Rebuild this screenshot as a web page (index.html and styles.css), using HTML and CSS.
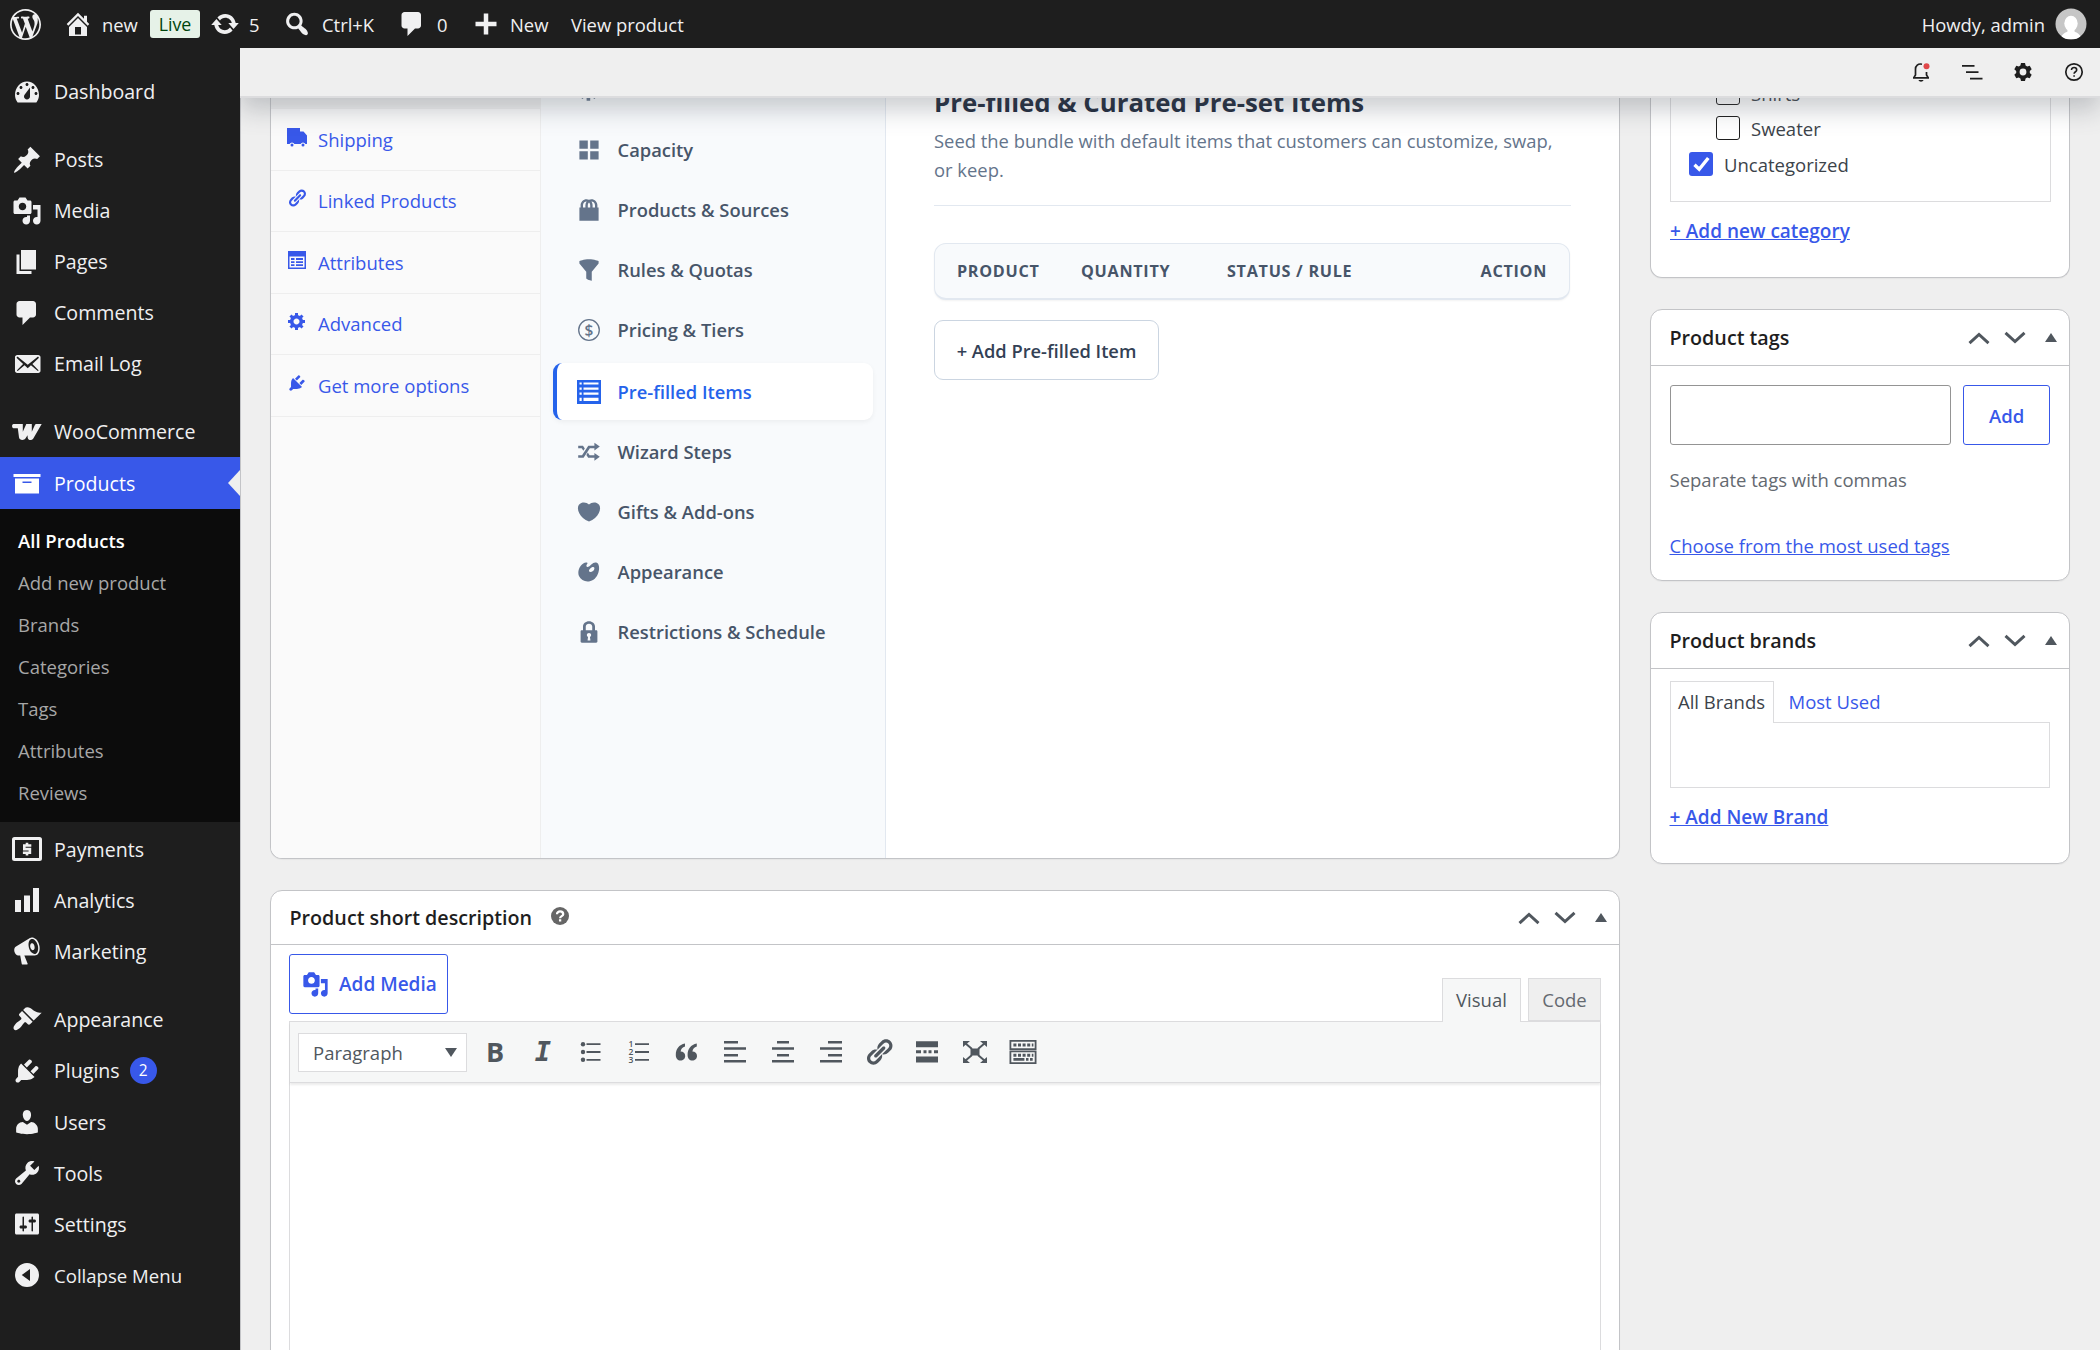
FILE: index.html
```html
<!DOCTYPE html>
<html lang="en">
<head>
    <meta charset="UTF-8">
    <meta name="viewport" content="width=device-width, initial-scale=1.0">
    <title>Edit product</title>
    <link rel="stylesheet" href="styles.css">
</head>
<body>
    <svg class="sprite" xmlns="http://www.w3.org/2000/svg">
        <symbol id="i-wp" viewBox="0 0 20 20"><path d="M20 10c0-5.51-4.49-10-10-10C4.48 0 0 4.49 0 10c0 5.52 4.48 10 10 10 5.51 0 10-4.48 10-10zM7.78 15.37L4.37 6.22c.55-.02 1.17-.08 1.17-.08.5-.06.44-1.13-.06-1.11 0 0-1.45.11-2.37.11-.18 0-.37 0-.58-.01C4.12 2.69 6.87 1.11 10 1.11c2.33 0 4.45.87 6.05 2.34-.68-.11-1.65.39-1.65 1.58 0 .74.45 1.36.9 2.1.35.61.55 1.36.55 2.46 0 1.49-1.4 5-1.4 5l-3.03-8.37c.54-.02.82-.17.82-.17.5-.05.44-1.25-.06-1.22 0 0-1.44.12-2.38.12-.87 0-2.33-.12-2.33-.12-.5-.03-.56 1.2-.06 1.22l.92.08 1.26 3.41zM17.41 10c.24-.64.74-1.87.43-4.25.7 1.29 1.05 2.71 1.05 4.25 0 3.29-1.73 6.24-4.4 7.78.97-2.59 1.94-5.2 2.92-7.78zM6.1 18.09C3.12 16.65 1.11 13.53 1.11 10c0-1.3.23-2.48.72-3.59C3.25 10.3 4.67 14.2 6.1 18.09zm4.03-6.63l2.58 6.98c-.86.29-1.76.45-2.71.45-.79 0-1.57-.11-2.29-.33.81-2.38 1.62-4.74 2.42-7.1z"/></symbol>
        <symbol id="i-home" viewBox="0 0 20 20"><path d="M16 8.5l1.53 1.53-1.06 1.06L10 4.6l-6.47 6.5-1.06-1.07L10 2.5l4 4v-2h2v4zm-6-2.46l6 5.99V18H4v-5.97zM12 17v-5H8v5h4z"/></symbol>
        <symbol id="i-update" viewBox="0 0 20 20"><path d="M10.2 3.28c3.53 0 6.43 2.61 6.92 6h2.08l-3.5 4-3.5-4h2.32c-.45-1.97-2.21-3.45-4.32-3.45-1.45 0-2.73.71-3.54 1.78L4.95 5.66C6.23 4.2 8.11 3.28 10.2 3.28zm-.4 13.44c-3.52 0-6.43-2.61-6.92-6H.8l3.5-4c1.17 1.33 2.33 2.67 3.5 4H5.48c.45 1.97 2.21 3.45 4.32 3.45 1.45 0 2.73-.71 3.54-1.78l1.71 1.95c-1.28 1.46-3.15 2.38-5.25 2.38z"/></symbol>
        <symbol id="i-search" viewBox="0 0 20 20"><path d="M12.14 4.18c1.87 1.87 2.11 4.75.72 6.89.12.1.22.21.36.31.2.16.47.36.81.59.34.24.56.39.66.47.42.31.73.57.94.78.32.32.6.65.84 1 .25.35.44.69.59 1.04.14.35.21.68.18 1-.02.32-.14.59-.36.81s-.49.34-.81.36c-.31.02-.65-.04-.99-.19-.35-.14-.7-.34-1.04-.59-.35-.24-.68-.52-1-.84-.21-.21-.47-.52-.77-.93-.1-.13-.25-.35-.47-.66-.22-.32-.4-.57-.56-.78-.16-.2-.29-.35-.44-.5-2.07 1.09-4.69.76-6.44-.98-2.14-2.15-2.14-5.64 0-7.78 2.15-2.15 5.63-2.15 7.78 0zm-1.41 6.36c1.36-1.37 1.36-3.58 0-4.95-1.37-1.37-3.59-1.37-4.95 0-1.37 1.37-1.37 3.58 0 4.95 1.36 1.37 3.58 1.37 4.95 0z"/></symbol>
        <symbol id="i-comment" viewBox="0 0 20 20"><path d="M5 2h9c1.1 0 2 .9 2 2v7c0 1.1-.9 2-2 2h-2l-5 5v-5H5c-1.1 0-2-.9-2-2V4c0-1.1.9-2 2-2z"/></symbol>
        <symbol id="i-plus" viewBox="0 0 20 20"><path d="M17 8.5v3h-5.5V17h-3v-5.5H3v-3h5.5V3h3v5.5z"/></symbol>
        <symbol id="i-dashboard" viewBox="0 0 20 20"><path fill-rule="evenodd" d="M3.76 17h12.48c1.1-1.37 1.76-3.11 1.76-5 0-4.97-3.58-9-8-9s-8 4.03-8 9c0 1.89.66 3.63 1.76 5zM10 4c.55 0 1 .45 1 1s-.45 1-1 1-1-.45-1-1 .45-1 1-1zM6 6c.55 0 1 .45 1 1s-.45 1-1 1-1-.45-1-1 .45-1 1-1zm8 0c.55 0 1 .45 1 1s-.45 1-1 1-1-.45-1-1 .45-1 1-1zm-5.37 5.55L12 7v6c0 1.1-.9 2-2 2s-2-.9-2-2c0-.57.24-1.08.63-1.45zM4 10c.55 0 1 .45 1 1s-.45 1-1 1-1-.45-1-1 .45-1 1-1zm12 0c.55 0 1 .45 1 1s-.45 1-1 1-1-.45-1-1 .45-1 1-1z"/></symbol>
        <symbol id="i-post" viewBox="0 0 20 20"><path d="M10.44 3.02l1.82-1.82 6.36 6.35-1.83 1.82c-1.05-.68-2.48-.57-3.41.36l-.75.75c-.92.93-1.04 2.35-.35 3.41l-1.83 1.82-2.41-2.41-2.8 2.79c-.42.42-3.38 2.71-3.8 2.29s1.86-3.39 2.28-3.81l2.79-2.79L4.1 9.36l1.83-1.82c1.05.69 2.48.57 3.4-.36l.75-.75c.93-.92 1.05-2.35.36-3.41z"/></symbol>
        <symbol id="i-media" viewBox="0 0 20 20"><path fill-rule="evenodd" d="M13 11V4c0-.55-.45-1-1-1h-1.67L9 1H5L3.67 3H2c-.55 0-1 .45-1 1v7c0 .55.45 1 1 1h10c.55 0 1-.45 1-1zM7 4.5c1.38 0 2.5 1.12 2.5 2.5S8.38 9.5 7 9.5 4.5 8.38 4.5 7 5.62 4.5 7 4.5zM14 6h5v10.5c0 1.38-1.12 2.5-2.5 2.5S14 17.88 14 16.5s1.12-2.5 2.5-2.5c.17 0 .34.02.5.05V9h-3V6zm-4 8.05V13h2v3.5c0 1.38-1.12 2.5-2.5 2.5S7 17.88 7 16.5 8.12 14 9.5 14c.17 0 .34.02.5.05z"/></symbol>
        <symbol id="i-page" viewBox="0 0 20 20"><path d="M6 15V2h10v13H6zm-1 1h8v2H3V5h2v11z"/></symbol>
        <symbol id="i-email" viewBox="0 0 20 20"><path fill-rule="evenodd" d="M19 14.5v-9c0-.83-.67-1.5-1.5-1.5H3.49c-.83 0-1.5.67-1.5 1.5v9c0 .83.67 1.5 1.5 1.5H17.5c.83 0 1.5-.67 1.5-1.5zm-1.31-9.11c.33.33.15.67-.03.84L13.6 9.95l3.9 4.06c.12.14.2.36.06.51-.13.16-.43.15-.56.05l-4.37-3.73-2.14 1.95-2.13-1.95-4.37 3.73c-.13.1-.43.11-.56-.05-.14-.15-.06-.37.06-.51l3.9-4.06-4.06-3.72c-.18-.17-.36-.51-.03-.84s.67-.17.95.07l6.24 5.04 6.25-5.04c.28-.24.62-.4.95-.07z"/></symbol>
        <symbol id="i-woo" viewBox="0 0 30 30"><path d="M1.500 7h9.300v7.800L14.300 7h5.500v7.800L23 7.800Q23.400 7 24.200 7h5.500L21.300 21.500c-1.300 2.200-5.300 2-5.600-.8l-.2-2.500-1.900 3.100c-1.500 2.600-6.300 2.200-6.600-1L5.800 11.200H1.500C-.4 11.200-.4 7 1.500 7z"/></symbol>
        <symbol id="i-archive" viewBox="0 0 20 20"><path fill-rule="evenodd" d="M19 4v2H1V4h18zM2 7h16v10H2V7zm11 3V9H7v1h6z"/></symbol>
        <symbol id="i-payments" viewBox="0 0 30 30"><rect x="1.500" y="4.500" width="27" height="21" rx="1" fill="none" stroke="currentColor" stroke-width="3"/><path fill="none" stroke="currentColor" stroke-width="2.600" d="M19.300 11.500h-7v3.600h5.600v3.700h-7M15 8.800v2.500m0 7.500v2.600"/></symbol>
        <symbol id="i-chart" viewBox="0 0 20 20"><path d="M18 18V2h-4v16h4zm-6 0V7H8v11h4zm-6 0v-8H2v8h4z"/></symbol>
        <symbol id="i-megaphone" viewBox="0 0 20 20"><path fill-rule="evenodd" d="M18.150 5.940c.46 1.620.38 3.220-.02 4.480-.42 1.280-1.260 2.180-2.300 2.480-.16.06-.26.06-.4.06-.06.02-.12.02-.18.02-.06.02-.14.02-.22.02h-6.800l2.220 5.500c.02.14-.06.26-.14.34-.08.1-.24.16-.34.16H6.950c-.1 0-.26-.06-.34-.16-.08-.08-.16-.2-.14-.34l-1-5.500H4.250l-.02-.02c-.5.06-1.080-.18-1.540-.62s-.88-1.080-1.060-1.880c-.24-.8-.2-1.560-.02-2.200.18-.62.58-1.080 1.060-1.300l.02-.02 9-5.400c.1-.06.18-.1.24-.16.06-.04.14-.08.24-.12.16-.08.28-.12.5-.18 1.040-.3 2.240.1 3.220.98s1.840 2.240 2.260 3.860zm-2.580 5.980h-.02c.4-.1.74-.34 1.040-.7.58-.7.86-1.760.86-3.040 0-.64-.1-1.300-.28-1.980-.34-1.360-1.020-2.500-1.780-3.240s-1.680-1.100-2.460-.88c-.82.22-1.400.96-1.700 2-.32 1.040-.28 2.360.06 3.720.38 1.360 1 2.500 1.800 3.240.78.74 1.620 1.100 2.480.88zm-2.540-7.080c.22-.04.42-.02.62.04.38.16.76.48 1.020 1s.42 1.200.42 1.780c0 .3-.04.56-.12.8-.18.48-.44.84-.86.94-.34.1-.8-.06-1.140-.4s-.64-.86-.78-1.500c-.18-.62-.12-1.240.02-1.720s.48-.84.82-.94z"/></symbol>
        <symbol id="i-appearance" viewBox="0 0 20 20"><path d="M14.480 11.060L7.410 3.990l1.500-1.500c.5-.56 2.300-.47 3.510.32 1.210.8 1.430 1.280 2.910 2.100 1.180.64 2.450 1.260 4.450.85zm-.71.71L6.700 4.700 4.930 6.470c-.39.39-.39 1.020 0 1.410l1.060 1.060c.39.39.39 1.030 0 1.420-.6.6-1.430 1.110-2.210 1.690-.35.26-.7.53-1.010.84C1.430 14.230.4 16.080 1.400 17.070c.99 1 2.840-.03 4.180-1.360.31-.31.58-.66.85-1.020.57-.78 1.080-1.610 1.690-2.210.39-.39 1.020-.39 1.410 0l1.060 1.060c.39.39 1.020.39 1.410 0z"/></symbol>
        <symbol id="i-plugin" viewBox="0 0 20 20"><path d="M13.110 4.360L9.870 7.600 8 5.730l3.240-3.240c.35-.34 1.050-.2 1.560.32.52.51.66 1.210.31 1.550zm-8 1.770l.91-1.120 9.010 9.010-1.190.84c-.71.71-2.630 1.160-3.820 1.160H6.140L4.900 17.260c-.59.59-1.540.59-2.120 0-.59-.58-.59-1.530 0-2.120l1.240-1.240v-3.880c0-1.130.4-3.190 1.090-3.890zm7.260 3.970l3.240-3.240c.34-.35 1.040-.21 1.550.31.52.51.66 1.210.31 1.550l-3.240 3.250z"/></symbol>
        <symbol id="i-users" viewBox="0 0 20 20"><path d="M10 9.250c-2.270 0-2.730-3.440-2.730-3.440C7 4.020 7.820 2 9.970 2c2.160 0 2.980 2.020 2.710 3.810 0 0-.41 3.440-2.680 3.440zm0 2.570L12.720 10c2.390 0 4.520 2.330 4.520 4.530v2.490s-3.650 1.130-7.240 1.130c-3.650 0-7.240-1.130-7.240-1.130v-2.490c0-2.250 1.940-4.480 4.470-4.480z"/></symbol>
        <symbol id="i-tools" viewBox="0 0 20 20"><path fill-rule="evenodd" d="M16.680 9.770c-1.340 1.340-3.300 1.670-4.950.99l-5.410 6.520c-.99.99-2.590.99-3.580 0s-.99-2.590 0-3.570l6.520-5.420c-.68-1.650-.35-3.610.99-4.950 1.280-1.280 3.120-1.620 4.720-1.060l-2.890 2.890 2.820 2.820 2.860-2.870c.53 1.580.18 3.390-1.080 4.650zM3.810 16.210c.4.39 1.040.39 1.430 0 .4-.4.4-1.040 0-1.430-.39-.4-1.030-.4-1.430 0-.39.39-.39 1.030 0 1.430z"/></symbol>
        <symbol id="i-settings" viewBox="0 0 20 20"><path fill-rule="evenodd" d="M18 16V4c0-.55-.45-1-1-1H3c-.55 0-1 .45-1 1v12c0 .55.45 1 1 1h14c.55 0 1-.45 1-1zM8 11h1c.55 0 1 .45 1 1s-.45 1-1 1H8v1.500c0 .28-.22.5-.5.5s-.5-.22-.5-.5V13H6c-.55 0-1-.45-1-1s.45-1 1-1h1V5.500c0-.28.22-.5.5-.5s.5.22.5.5V11zm5-2h-1c-.55 0-1-.45-1-1s.45-1 1-1h1V5.500c0-.28.22-.5.5-.5s.5.22.5.5V7h1c.55 0 1 .45 1 1s-.45 1-1 1h-1v5.500c0 .28-.22.5-.5.5s-.5-.22-.5-.5V9z"/></symbol>
        <symbol id="i-collapse" viewBox="0 0 20 20"><path fill-rule="evenodd" d="M10 2a8 8 0 1 1 0 16 8 8 0 0 1 0-16zm2 4l-5.500 4 5.500 4V6z"/></symbol>
        <symbol id="i-gear" viewBox="0 0 20 20"><path fill-rule="evenodd" d="M18 12h-2.180c-.17.7-.44 1.350-.81 1.930l1.540 1.540-2.100 2.100-1.540-1.540c-.58.36-1.230.63-1.910.79V19H8v-2.180c-.68-.16-1.330-.43-1.910-.79l-1.540 1.540-2.120-2.120 1.540-1.540c-.36-.58-.63-1.230-.79-1.910H1V9.030h2.170c.16-.7.44-1.350.8-1.940L2.430 5.550l2.100-2.100 1.540 1.540c.58-.37 1.240-.64 1.930-.81V2h3v2.180c.68.16 1.330.43 1.910.79l1.540-1.540 2.120 2.120-1.540 1.540c.36.59.64 1.240.8 1.940H18V12zm-8.500 1.500c1.660 0 3-1.340 3-3s-1.340-3-3-3-3 1.340-3 3 1.340 3 3 3z"/></symbol>
        <symbol id="i-link" viewBox="0 0 20 20"><path d="M17.740 2.760c1.680 1.690 1.680 4.410 0 6.100l-1.530 1.520c-1.120 1.120-2.700 1.470-4.140 1.090l2.620-2.610.76-.77.76-.76c.84-.84.84-2.200 0-3.040-.84-.85-2.200-.85-3.040 0l-.77.76-3.380 3.380c-.37-1.440-.02-3.020 1.100-4.140l1.520-1.530c1.690-1.680 4.420-1.680 6.100 0zM8.590 13.430l5.340-5.340c.42-.42.42-1.100 0-1.520-.44-.43-1.130-.39-1.530 0l-5.330 5.340c-.42.42-.42 1.100 0 1.520.44.43 1.130.39 1.520 0zm-.76 2.290l4.140-4.150c.38 1.440.03 3.020-1.090 4.140l-1.520 1.530c-1.690 1.680-4.410 1.680-6.100 0-1.680-1.680-1.680-4.420 0-6.100l1.530-1.520c1.120-1.120 2.700-1.470 4.140-1.100l-4.140 4.150c-.85.84-.85 2.200 0 3.050.84.84 2.200.84 3.040 0z"/></symbol>
        <symbol id="i-truck" viewBox="0 0 20 20"><path d="M0 1h13v3.500h3.500L20 8.500V17h-1.600a2.600 2.600 0 0 0-4.800 0H7.400a2.600 2.600 0 0 0-4.800 0H0z"/><circle cx="5" cy="18" r="1.500"/><circle cx="16" cy="18" r="1.500"/></symbol>
        <symbol id="i-form" viewBox="0 0 20 20"><path fill-rule="evenodd" d="M1 1h18v18H1zM2.500 6.500v11h15v-11zM4 8h3.500v2H4zm5 0h7v2H9zM4 11.200h3.500v1.800H4zm5 0h7v1.800H9zM4 14.300h3.500v1.700H4zm5 0h7v1.700H9z"/></symbol>
        <symbol id="i-grid" viewBox="0 0 20 20"><path d="M9 9V2H2v7h7zm9 0V2h-7v7h7zm-9 9v-7H2v7h7zm9 0v-7h-7v7h7z"/></symbol>
        <symbol id="i-bag" viewBox="0 0 20 20"><path fill-rule="evenodd" d="M17 8h1v11H2V8h1V6c0-2.760 2.240-5 5-5 .71 0 1.390.15 2 .42.61-.27 1.290-.42 2-.42 2.760 0 5 2.240 5 5v2zM5 6v2h2V6c0-1.130.39-2.160 1.020-3H8C6.350 3 5 4.350 5 6zm10 2V6c0-1.650-1.350-3-3-3h-.02c.63.84 1.020 1.870 1.020 3v2h2zm-5-4.220C9.390 4.330 9 5.120 9 6v2h2V6c0-.88-.39-1.670-1-2.220z"/></symbol>
        <symbol id="i-filter" viewBox="0 0 20 20"><path d="M2 4.500v-2s3.600-1.500 8-1.500 8 1.500 8 1.500v2l-5.700 7.030v7.470s-1.300-.09-2.400-.59-2.200-1.400-2.200-1.400v-5.480z"/></symbol>
        <symbol id="i-money" viewBox="0 0 24 24"><circle cx="12" cy="12" r="10.300" fill="none" stroke="currentColor" stroke-width="1.300"/><text x="12" y="17.500" text-anchor="middle" font-size="15.500" font-weight="600">$</text></symbol>
        <symbol id="i-list" viewBox="0 0 24 24"><path fill-rule="evenodd" d="M0 0h24v24H0zM2.500 2.500h2.200v2H2.500zm4 0h15v2h-15zM2.500 7.500h2.200v2.200H2.500zm4 0h15v2.200h-15zM2.500 12.500h2.200v2.200H2.500zm4 0h15v2.200h-15zM2.500 17.800h2.200v3.200H2.500zm4 0h15v3.200h-15z"/></symbol>
        <symbol id="i-shuffle" viewBox="0 0 20 20"><path d="M19 5.500l-4.500 3.200V6.800h-3.800l-5.200 8H1v-2.100h3.200l5.200-8h5.100V2.300zM1 4.700h4l1.500 2.300-1.200 2L3.900 6.800H1V4.700zm18 9.300l-4.500 3.200v-2.400H9.300l-1.500-2.300 1.200-2 1.500 2.200h4v-1.900z"/></symbol>
        <symbol id="i-heart" viewBox="0 0 20 20"><path d="M10 18c4-1.500 6.700-4.200 8.100-7 1.400-2.700 1.500-5.400.3-7-1.200-1.500-2.700-2-4.200-2s-3.100.7-4.200 1.700C8.900 2.700 7.300 2 5.800 2s-3 .5-4.200 2c-1.200 1.600-1.100 4.300.3 7 1.400 2.800 4.100 5.500 8.100 7z"/></symbol>
        <symbol id="i-art" viewBox="0 0 20 20"><path fill-rule="evenodd" d="M8.550 2.300c1.200.4-2.100 2.300 0 3.500 1.200.7 3.700-2.500 5-3.200 1.100-.6 3.500-.9 4.400 1.300 1.200 2.700.2 9.700-4.300 12.500-4.400 2.800-10 1.400-12-3C-.6 8.300 4.600.9 8.550 2.300zm1.500 7.100c.8 1.800 5.300-.5 4.300-3.100-.7-1.700-5 1.400-4.300 3.100z"/></symbol>
        <symbol id="i-lock" viewBox="0 0 20 20"><path fill-rule="evenodd" d="M15 8.500h1c.6 0 1 .4 1 1V18c0 .6-.4 1-1 1H4c-.6 0-1-.4-1-1V9.500c0-.6.4-1 1-1h1V5.500C5 3 7.200 1 10 1s5 2 5 4.500v3zm-2.300 0V5.500c0-1.300-1.200-2.400-2.700-2.400S7.300 4.200 7.300 5.500v3h5.400zM11.200 17l-.4-2.900c.6-.3 1-.9 1-1.600 0-1-.8-1.700-1.800-1.700s-1.800.7-1.800 1.700c0 .7.4 1.300 1 1.600L8.800 17h2.400z"/></symbol>
        <symbol id="i-up" viewBox="0 0 22 14"><path fill="none" stroke="currentColor" stroke-width="3" d="M1.500 12.200L11 3.500l9.500 8.700"/></symbol>
        <symbol id="i-down" viewBox="0 0 22 14"><path fill="none" stroke="currentColor" stroke-width="3" d="M1.500 1.800L11 10.500l9.500-8.700"/></symbol>
        <symbol id="i-tri" viewBox="0 0 12 9"><path d="M0 9L6 0l6 9z"/></symbol>
    </svg>

    <header class="adminbar">
        <div class="bar-left">
            <svg class="wp-logo"><use href="#i-wp"/></svg>
            <a class="bar-item bar-site"><svg class="ico"><use href="#i-home"/></svg>new</a>
            <span class="live">Live</span>
            <a class="bar-item bar-updates"><svg class="ico"><use href="#i-update"/></svg>5</a>
            <a class="bar-item bar-search"><svg class="ico"><use href="#i-search"/></svg>Ctrl+K</a>
            <a class="bar-item bar-comments"><svg class="ico"><use href="#i-comment"/></svg>0</a>
            <a class="bar-item bar-new"><svg class="ico"><use href="#i-plus"/></svg>New</a>
            <a class="bar-item bar-view">View product</a>
        </div>
        <div class="bar-right">
            Howdy, admin
            <svg class="avatar" viewBox="0 0 32 32">
                <clipPath id="av"><circle cx="16" cy="16" r="15.500"/></clipPath>
                <g clip-path="url(#av)"><rect width="32" height="32" fill="#c6c6c6"/><ellipse cx="16" cy="15.500" rx="6.700" ry="7.700" fill="#fff"/><path d="M5 31c2-5.500 6-6.500 7.500-7.500V20h7v3.500c1.500 1 5.500 2 7.500 7.500z" fill="#fff"/></g>
            </svg>
        </div>
    </header>

    <div class="wrap">
        <nav class="menu">
            <a class="menu-item"><svg class="ico"><use href="#i-dashboard"/></svg>Dashboard</a>
            <a class="menu-item sep"><svg class="ico"><use href="#i-post"/></svg>Posts</a>
            <a class="menu-item"><svg class="ico"><use href="#i-media"/></svg>Media</a>
            <a class="menu-item"><svg class="ico"><use href="#i-page"/></svg>Pages</a>
            <a class="menu-item"><svg class="ico"><use href="#i-comment"/></svg>Comments</a>
            <a class="menu-item"><svg class="ico"><use href="#i-email"/></svg>Email Log</a>
            <a class="menu-item sep"><svg class="ico"><use href="#i-woo"/></svg>WooCommerce</a>
            <a class="menu-item current"><svg class="ico"><use href="#i-archive"/></svg>Products</a>
            <div class="submenu">
                <a class="on">All Products</a>
                <a>Add new product</a>
                <a>Brands</a>
                <a>Categories</a>
                <a>Tags</a>
                <a>Attributes</a>
                <a>Reviews</a>
            </div>
            <a class="menu-item"><svg class="ico"><use href="#i-payments"/></svg>Payments</a>
            <a class="menu-item"><svg class="ico"><use href="#i-chart"/></svg>Analytics</a>
            <a class="menu-item"><svg class="ico"><use href="#i-megaphone"/></svg>Marketing</a>
            <a class="menu-item sep"><svg class="ico"><use href="#i-appearance"/></svg>Appearance</a>
            <a class="menu-item tall"><svg class="ico"><use href="#i-plugin"/></svg>Plugins <span class="count">2</span></a>
            <a class="menu-item"><svg class="ico"><use href="#i-users"/></svg>Users</a>
            <a class="menu-item"><svg class="ico"><use href="#i-tools"/></svg>Tools</a>
            <a class="menu-item"><svg class="ico"><use href="#i-settings"/></svg>Settings</a>
            <a class="menu-item collapse"><svg class="ico"><use href="#i-collapse"/></svg>Collapse Menu</a>
        </nav>

        <main class="main">
            <div class="subbar">
                <svg viewBox="0 0 24 24"><path fill="none" stroke="#1e1e1e" stroke-width="1.700" d="M13 4.200C9 3.200 6.500 6 6.500 9v6L4.800 17.600M17.500 12v3l1.700 2.600M4 17.800h16"/><path d="M9.500 20h5c-.5 2.300-4.500 2.300-5 0z"/><circle cx="17.500" cy="6.300" r="3" fill="#e0484a"/></svg>
                <svg viewBox="0 0 24 24"><path fill="none" stroke="#1e1e1e" stroke-width="1.700" d="M2 5.800h12.500M6 12.200h12.500M10 18.600h12.500"/></svg>
                <svg viewBox="0 0 24 24"><path fill-rule="evenodd" d="M10 3h4l.6 2.600 1.600.9 2.500-.8 2 3.500-1.900 1.800v2l1.900 1.800-2 3.500-2.500-.8-1.600.9L14 21h-4l-.6-2.600-1.600-.9-2.500.8-2-3.500L5.200 13v-2L3.300 9.200l2-3.500 2.500.8 1.600-.9zM12 8.600a3.400 3.400 0 1 0 0 6.800 3.400 3.400 0 0 0 0-6.800z"/></svg>
                <svg viewBox="0 0 24 24"><circle cx="12" cy="12" r="8.200" fill="none" stroke="#1e1e1e" stroke-width="1.700"/><path fill="none" stroke="#1e1e1e" stroke-width="1.600" d="M9.500 10c0-3.300 5.200-3.200 5.200 0 0 1.800-2.600 1.700-2.600 3.800M12.100 15.200v1.600"/></svg>
            </div>

            <div class="content">
                <div class="col-main">
                    <section class="card product-data">
                        <ul class="data-tabs">
                            <li class="cut"></li>
                            <li><svg><use href="#i-truck"/></svg>Shipping</li>
                            <li><svg><use href="#i-link"/></svg>Linked Products</li>
                            <li><svg><use href="#i-form"/></svg>Attributes</li>
                            <li><svg><use href="#i-gear"/></svg>Advanced</li>
                            <li><svg><use href="#i-plugin"/></svg>Get more options</li>
                        </ul>
                        <ul class="bundle-nav">
                            <li><svg><use href="#i-gear"/></svg></li>
                            <li><svg><use href="#i-grid"/></svg>Capacity</li>
                            <li><svg><use href="#i-bag"/></svg>Products &amp; Sources</li>
                            <li><svg><use href="#i-filter"/></svg>Rules &amp; Quotas</li>
                            <li><svg><use href="#i-money"/></svg>Pricing &amp; Tiers</li>
                            <li class="active"><svg><use href="#i-list"/></svg>Pre-filled Items</li>
                            <li><svg><use href="#i-shuffle"/></svg>Wizard Steps</li>
                            <li><svg><use href="#i-heart"/></svg>Gifts &amp; Add-ons</li>
                            <li><svg><use href="#i-art"/></svg>Appearance</li>
                            <li><svg><use href="#i-lock"/></svg>Restrictions &amp; Schedule</li>
                        </ul>
                        <div class="bundle-panel">
                            <h3>Pre-filled &amp; Curated Pre-set Items</h3>
                            <p>Seed the bundle with default items that customers can customize, swap, or keep.</p>
                            <div class="items-head">
                                <span>Product</span>
                                <span>Quantity</span>
                                <span>Status / Rule</span>
                                <span>Action</span>
                            </div>
                            <button class="add-item">+ Add Pre-filled Item</button>
                        </div>
                    </section>

                    <section class="card short-desc">
                        <div class="card-head">
                            <h2>Product short description</h2>
                            <svg class="tip" viewBox="0 0 18 18"><circle cx="9" cy="9" r="9"/><path fill="none" stroke="#fff" stroke-width="2.300" d="M6 7.200c0-3.800 6.200-3.600 6.200 0 0 2-3.100 1.900-3.100 4M9.100 12.200v2.300"/></svg>
                            <div class="handles">
                                <svg class="chev"><use href="#i-up"/></svg>
                                <svg class="chev"><use href="#i-down"/></svg>
                                <svg class="tri"><use href="#i-tri"/></svg>
                            </div>
                        </div>
                        <div class="editor">
                            <div class="editor-tools">
                                <button class="btn add-media"><svg><use href="#i-media"/></svg>Add Media</button>
                                <div class="editor-tabs">
                                    <span class="on">Visual</span>
                                    <span>Code</span>
                                </div>
                            </div>
                            <div class="editor-box">
                                <div class="toolbar">
                                    <div class="format">Paragraph<svg class="caret" viewBox="0 0 12 9"><path d="M0 0h12L6 9z"/></svg></div>
                                    <span class="tool bold">B</span>
                                    <span class="tool italic">I</span>
                                    <svg class="tool" viewBox="0 0 30 30"><path fill="none" stroke="currentColor" stroke-width="1.800" d="M10.500 7.200h14M10.500 15h14M10.500 22.800h14"/><circle cx="7" cy="7.200" r="2.200"/><circle cx="7" cy="15" r="2.200"/><circle cx="7" cy="22.800" r="2.200"/></svg>
                                    <svg class="tool" viewBox="0 0 30 30"><path fill="none" stroke="currentColor" stroke-width="1.800" d="M11 7.200h14M11 15h14M11 22.800h14"/><g font-size="8.500" font-weight="600"><text x="4.500" y="9.500">1</text><text x="4.500" y="17.500">2</text><text x="4.500" y="25.500">3</text></g></svg>
                                    <svg class="tool" viewBox="0 0 30 30"><path d="M13 6.500C7 7.500 3.800 12 3.800 18c0 3.500 2 5.500 4.700 5.500 2.600 0 4.700-1.900 4.700-4.600 0-2.800-1.900-4.500-4.600-4.500.4-2.500 1.900-4 4.400-4.900zM24.800 6.500c-6 1-9.200 5.500-9.200 11.500 0 3.500 2 5.500 4.700 5.500 2.600 0 4.700-1.900 4.700-4.600 0-2.800-1.900-4.500-4.600-4.500.4-2.500 1.900-4 4.400-4.900z"/></svg>
                                    <svg class="tool" viewBox="0 0 30 30"><path fill="none" stroke="currentColor" stroke-width="2.600" d="M4 5.300h14M4 11.500h22M4 18.200h14M4 24.200h22"/></svg>
                                    <svg class="tool" viewBox="0 0 30 30"><path fill="none" stroke="currentColor" stroke-width="2.600" d="M9 5.300h12M4 11.500h22M9 18.200h12M4 24.200h22"/></svg>
                                    <svg class="tool" viewBox="0 0 30 30"><path fill="none" stroke="currentColor" stroke-width="2.600" d="M12 5.300h14M4 11.500h22M12 18.200h14M4 24.200h22"/></svg>
                                    <svg class="tool"><use href="#i-link"/></svg>
                                    <svg class="tool" viewBox="0 0 30 30"><path d="M4 4.200h22v6H4zM4 19.500h22v6H4zM4 13.300h5v3H4zM11.500 13.300h3v3h-3zM16.500 13.300h3v3h-3zM22 13.300h4v3h-4z"/></svg>
                                    <svg class="tool" viewBox="0 0 30 30"><path fill="none" stroke="currentColor" stroke-width="2" d="M5 6l7 6M25 6l-7 6M5 24l7-6M25 24l-7-6"/><path d="M10.500 11.500h9v7h-9zM3 4h7L3 10zM27 4h-7l7 6zM3 26h7l-7-6zM27 26h-7l7-6z"/></svg>
                                    <svg class="tool" viewBox="0 0 30 30"><path fill="none" stroke="currentColor" stroke-width="1.800" d="M2.400 3.900h25.200v8.200H2.400zM2.400 14.400h25.200v11.700H2.400z"/><path fill="none" stroke="currentColor" stroke-width="3" stroke-dasharray="3 1.600" d="M5.400 8h20M5.400 18.200h20"/><path fill="none" stroke="currentColor" stroke-width="2.600" d="M5.400 22.400h11M18 22.400h2.500M22 22.400h2.700"/></svg>
                                </div>
                            </div>
                        </div>
                    </section>
                </div>

                <aside class="col-side">
                    <section class="card categories">
                        <div class="cat-list">
                            <label class="child"><span class="box"></span>Shirts</label>
                            <label class="child"><span class="box"></span>Sweater</label>
                            <label><span class="box checked"><svg viewBox="0 0 24 24"><path fill="none" stroke="#fff" stroke-width="3.400" d="M5.500 12.800l4.700 4.400L19.300 6"/></svg></span>Uncategorized</label>
                        </div>
                        <a class="link strong">+ Add new category</a>
                    </section>

                    <section class="card tags">
                        <div class="card-head">
                            <h2>Product tags</h2>
                            <div class="handles">
                                <svg class="chev"><use href="#i-up"/></svg>
                                <svg class="chev"><use href="#i-down"/></svg>
                                <svg class="tri"><use href="#i-tri"/></svg>
                            </div>
                        </div>
                        <div class="card-body">
                            <div class="tag-row">
                                <input type="text">
                                <button class="btn">Add</button>
                            </div>
                            <p class="hint">Separate tags with commas</p>
                            <a class="link">Choose from the most used tags</a>
                        </div>
                    </section>

                    <section class="card brands">
                        <div class="card-head">
                            <h2>Product brands</h2>
                            <div class="handles">
                                <svg class="chev"><use href="#i-up"/></svg>
                                <svg class="chev"><use href="#i-down"/></svg>
                                <svg class="tri"><use href="#i-tri"/></svg>
                            </div>
                        </div>
                        <div class="card-body">
                            <div class="brand-tabs">
                                <span class="on">All Brands</span>
                                <span>Most Used</span>
                            </div>
                            <div class="brand-list"></div>
                            <a class="link strong">+ Add New Brand</a>
                        </div>
                    </section>
                </aside>
            </div>
        </main>
    </div>
</body>
</html>
```
FILE: styles.css
```css
* {
    padding: 0;
    margin: 0;
    box-sizing: border-box;
}
body {
    font-family: "Open Sans", sans-serif;
    font-size: 18.5px;
    color: #3c434a;
    background: #efefef;
    width: 2100px;
    height: 1350px;
    overflow: hidden;
}
ul {
    list-style: none;
}
svg {
    fill: currentColor;
    flex: none;
}
button {
    font: inherit;
    background: #fff;
}
.sprite {
    display: none;
}
.ico {
    width: 30px;
    height: 30px;
}

/* top admin bar */
.adminbar {
    height: 48px;
    background: #1e1e1e;
    color: #f0f0f1;
    display: flex;
    justify-content: space-between;
    align-items: center;
    padding: 0 13px 0 10px;
    font-size: 18.4px;
}
.bar-left, .bar-right, .bar-item {
    display: flex;
    align-items: center;
}
.bar-item {
    height: 48px;
    white-space: nowrap;
}
.wp-logo {
    width: 31px;
    height: 31px;
}
.bar-site {
    margin-left: 22px;
    width: 87px;
    gap: 9px;
}
.live {
    width: 50px;
    height: 28px;
    margin-right: 10px;
    border-radius: 3px;
    background: #e6f2e8;
    color: #00450c;
    line-height: 28px;
    text-align: center;
    font-size: 17.8px;
}
.bar-updates {
    width: 72px;
    gap: 9px;
}
.bar-search {
    width: 115px;
    gap: 10px;
}
.bar-comments {
    width: 74px;
    gap: 10px;
}
.bar-new {
    width: 100px;
    gap: 9px;
}
.bar-right {
    gap: 10px;
}
.avatar {
    width: 32px;
    height: 32px;
}

/* left menu */
.wrap {
    display: flex;
    height: 1302px;
}
.menu {
    width: 240px;
    flex: none;
    background: #1e1e1e;
    padding-top: 18px;
    color: #f0f0f1;
    font-size: 19.6px;
}
.menu-item {
    display: flex;
    align-items: center;
    gap: 12px;
    height: 51px;
    padding-left: 12px;
}
.menu-item.sep {
    margin-top: 17px;
}
.menu-item.tall {
    height: 52px;
}
.menu-item.current {
    position: relative;
    height: 52px;
    background: #3858e9;
    color: #fff;
}
.menu-item.current::after {
    content: "";
    position: absolute;
    right: 0;
    top: 13px;
    border: 13px solid transparent;
    border-left-width: 0;
    border-right: 12px solid #efefef;
}
.menu-item.collapse {
    font-size: 18.6px;
}
.submenu {
    height: 313px;
    margin-bottom: 1.5px;
    padding: 10.5px 18px;
    background: #0c0c0c;
    color: #a7a7a7;
    font-size: 18.5px;
}
.submenu a {
    display: block;
    height: 42px;
    line-height: 42px;
}
.submenu .on {
    color: #fff;
    font-weight: 600;
}
.count {
    width: 27px;
    height: 27px;
    margin-left: -2px;
    border-radius: 50%;
    background: #3858e9;
    color: #fff;
    font-size: 15.5px;
    line-height: 27px;
    text-align: center;
}

/* page header strip */
.main {
    flex: 1;
    min-width: 0;
    overflow: hidden;
}
.subbar {
    position: relative;
    z-index: 2;
    height: 50px;
    padding-right: 14px;
    display: flex;
    justify-content: flex-end;
    align-items: center;
    gap: 27px;
    background: #efefef;
    border-bottom: 2px solid #dcdcde;
    color: #1e1e1e;
    box-shadow: 0 12px 24px rgba(85, 93, 102, 0.3);
}
.subbar svg {
    width: 24px;
    height: 24px;
}
.content {
    display: flex;
    gap: 30px;
    height: 1252px;
    padding-left: 29px;
    border-left: 1px solid #c3c4c7;
}
.col-main {
    width: 1350px;
}
.col-side {
    width: 420px;
}
.card {
    margin-bottom: 31px;
    background: #fff;
    border: 1px solid #c3c4c7;
    border-radius: 12px;
    box-shadow: 0 1px 1px rgba(0, 0, 0, 0.04);
    overflow: hidden;
}
.card-head {
    display: flex;
    align-items: center;
    height: 56px;
    padding: 0 12px 0 18.5px;
    border-bottom: 1px solid #c3c4c7;
    color: #1e1e1e;
}
.card-head h2 {
    font-size: 19.7px;
    font-weight: 550;
}
.handles {
    display: flex;
    align-items: center;
    gap: 14px;
    margin-left: auto;
    color: #50575e;
}
.chev {
    width: 22px;
    height: 14px;
}
.tri {
    width: 12px;
    height: 9px;
    margin-left: 5px;
}

/* product data box */
.product-data {
    display: flex;
    height: 761px;
    border-top: none;
    border-radius: 0 0 12px 12px;
}
.data-tabs {
    width: 270px;
    background: #fafafa;
    border-right: 1px solid #eee;
    color: #3858e9;
}
.data-tabs li {
    display: flex;
    align-items: center;
    gap: 11px;
    height: 61.5px;
    padding-left: 16px;
    border-bottom: 1px solid #eee;
}
.data-tabs .cut {
    height: 11px;
    background: #eee;
}
.data-tabs svg {
    width: 20px;
    height: 20px;
    margin-top: -5px;
}
.bundle-nav {
    width: 345px;
    margin-top: -37px;
    padding: 0 12px;
    background: #f8fafc;
    border-right: 1px solid #e2e8f0;
    color: #475569;
    font-weight: 600;
    font-size: 18.35px;
}
.bundle-nav li {
    display: flex;
    align-items: center;
    gap: 16.5px;
    height: 57px;
    margin-bottom: 3px;
    padding-left: 24px;
}
.bundle-nav svg {
    width: 24px;
    height: 24px;
    color: #64748b;
}
.bundle-nav .active {
    padding-left: 20px;
    margin: 5px 0 3px;
    background: #fff;
    border-left: 4px solid #2563eb;
    border-radius: 9px;
    box-shadow: 0 2px 5px rgba(0, 0, 0, 0.05);
    color: #2563eb;
}
.bundle-nav .active svg {
    color: #2563eb;
}
.bundle-panel {
    width: 685px;
    margin-top: -13px;
    padding-left: 48px;
}
.bundle-panel h3 {
    font-size: 25.8px;
    line-height: 35px;
    color: #1e293b;
    font-weight: 700;
}
.bundle-panel p {
    width: 637px;
    padding: 6px 0 21px;
    border-bottom: 1px solid #e2e8f0;
    color: #64748b;
    font-size: 18.4px;
    line-height: 29px;
}
.items-head {
    display: flex;
    align-items: center;
    height: 57px;
    width: 636px;
    margin: 36.5px 0 20.5px;
    padding: 0 22px;
    background: #f8fafc;
    border: 1px solid #e2e8f0;
    border-bottom-width: 2px;
    border-radius: 12px;
    box-shadow: 0 1px 2px rgba(0, 0, 0, 0.05);
    color: #475569;
    font-size: 16.2px;
    font-weight: 700;
    letter-spacing: 0.7px;
    text-transform: uppercase;
}
.items-head span:nth-child(1) {
    width: 124px;
}
.items-head span:nth-child(2) {
    width: 146px;
}
.items-head span:nth-child(4) {
    margin-left: auto;
}
.add-item {
    width: 225px;
    height: 60px;
    border: 1px solid #cbd5e1;
    border-radius: 9px;
    color: #334155;
    font-size: 18.3px;
    font-weight: 600;
}

/* short description editor */
.short-desc {
    height: 520px;
}
.short-desc .card-head {
    height: 54px;
}
.tip {
    width: 18px;
    height: 18px;
    margin: -3px 0 0 19px;
    color: #666;
}
.editor {
    padding: 9px 18px 0 18px;
}
.editor-tools {
    display: flex;
    justify-content: space-between;
    height: 67px;
}
.btn {
    border: 1px solid #3858e9;
    border-radius: 3px;
    color: #3858e9;
    font-weight: 600;
}
.add-media {
    display: flex;
    align-items: center;
    gap: 10px;
    width: 159px;
    height: 60px;
    padding-left: 12px;
    font-size: 19px;
}
.add-media svg {
    width: 27px;
    height: 27px;
}
.editor-tabs {
    display: flex;
    gap: 7px;
    padding-top: 24px;
    color: #646970;
}
.editor-tabs span {
    width: 73px;
    height: 43px;
    border: 1px solid #dcdcde;
    background: #efefef;
    line-height: 41px;
    text-align: center;
}
.editor-tabs .on {
    position: relative;
    z-index: 1;
    width: 79px;
    height: 44px;
    border-bottom: none;
    background: #f6f7f7;
    color: #50575e;
}
.editor-box {
    height: 400px;
    border: 1px solid #dcdcde;
}
.toolbar {
    display: flex;
    align-items: center;
    gap: 18px;
    height: 61px;
    padding-left: 8px;
    background: #f6f7f7;
    border-bottom: 1px solid #dcdcde;
    box-shadow: 0 2px 2px rgba(0, 0, 0, 0.08);
    color: #50575e;
}
.format {
    display: flex;
    align-items: center;
    justify-content: space-between;
    width: 169px;
    height: 39px;
    margin-right: -5px;
    padding: 0 9px 0 14px;
    border: 1px solid #dcdcde;
    background: #fff;
}
.caret {
    width: 12px;
    height: 9px;
}
.tool {
    width: 30px;
    height: 30px;
    line-height: 30px;
    text-align: center;
}
.bold {
    font-size: 27px;
    font-weight: 700;
}
.italic {
    font-family: "DejaVu Sans Mono", monospace;
    font-size: 27px;
    font-style: italic;
    font-weight: 700;
}

/* side boxes */
.categories {
    height: 180px;
    border-top: none;
    border-radius: 0 0 12px 12px;
    padding: 0 18px 0 19px;
}
.cat-list {
    height: 128px;
    margin-top: -24px;
    margin-bottom: 16px;
    padding-left: 18px;
    border: 1px solid #dcdcde;
    border-top: none;
}
.cat-list label {
    display: flex;
    align-items: center;
    gap: 11px;
    height: 36px;
}
.cat-list label:first-child {
    padding-top: 2px;
}
.cat-list .child {
    padding-left: 27px;
}
.box {
    width: 24px;
    height: 24px;
    border: 1px solid #1e1e1e;
    border-radius: 3px;
    background: #fff;
}
.box.checked {
    border: none;
    background: #3858e9;
}
.box svg {
    display: block;
}
.link {
    color: #3858e9;
    text-decoration: underline;
}
.link.strong {
    font-size: 19px;
    font-weight: 600;
}
.card-body {
    padding: 0 19px 0 18.5px;
}
.tags {
    height: 272px;
}
.tag-row {
    display: flex;
    gap: 12px;
    padding-top: 19px;
}
.tag-row input {
    width: 282px;
    height: 60px;
    border: 1px solid #949494;
    border-radius: 3px;
}
.tag-row .btn {
    width: 87px;
    height: 60px;
}
.hint {
    margin: 22px 0 41px;
    color: #646970;
}
.brands {
    height: 252px;
}
.brand-tabs {
    display: flex;
    padding-top: 11.5px;
    color: #3858e9;
}
.brand-tabs span {
    height: 41px;
    padding: 0 15px;
    line-height: 41px;
}
.brand-tabs .on {
    position: relative;
    height: 42px;
    width: 104px;
    margin-bottom: -1px;
    padding: 0;
    border: 1px solid #dcdcde;
    border-bottom: none;
    background: #fff;
    color: #3c434a;
    line-height: 40px;
    text-align: center;
}
.brand-list {
    height: 66px;
    margin-bottom: 16px;
    border: 1px solid #dcdcde;
}
```
